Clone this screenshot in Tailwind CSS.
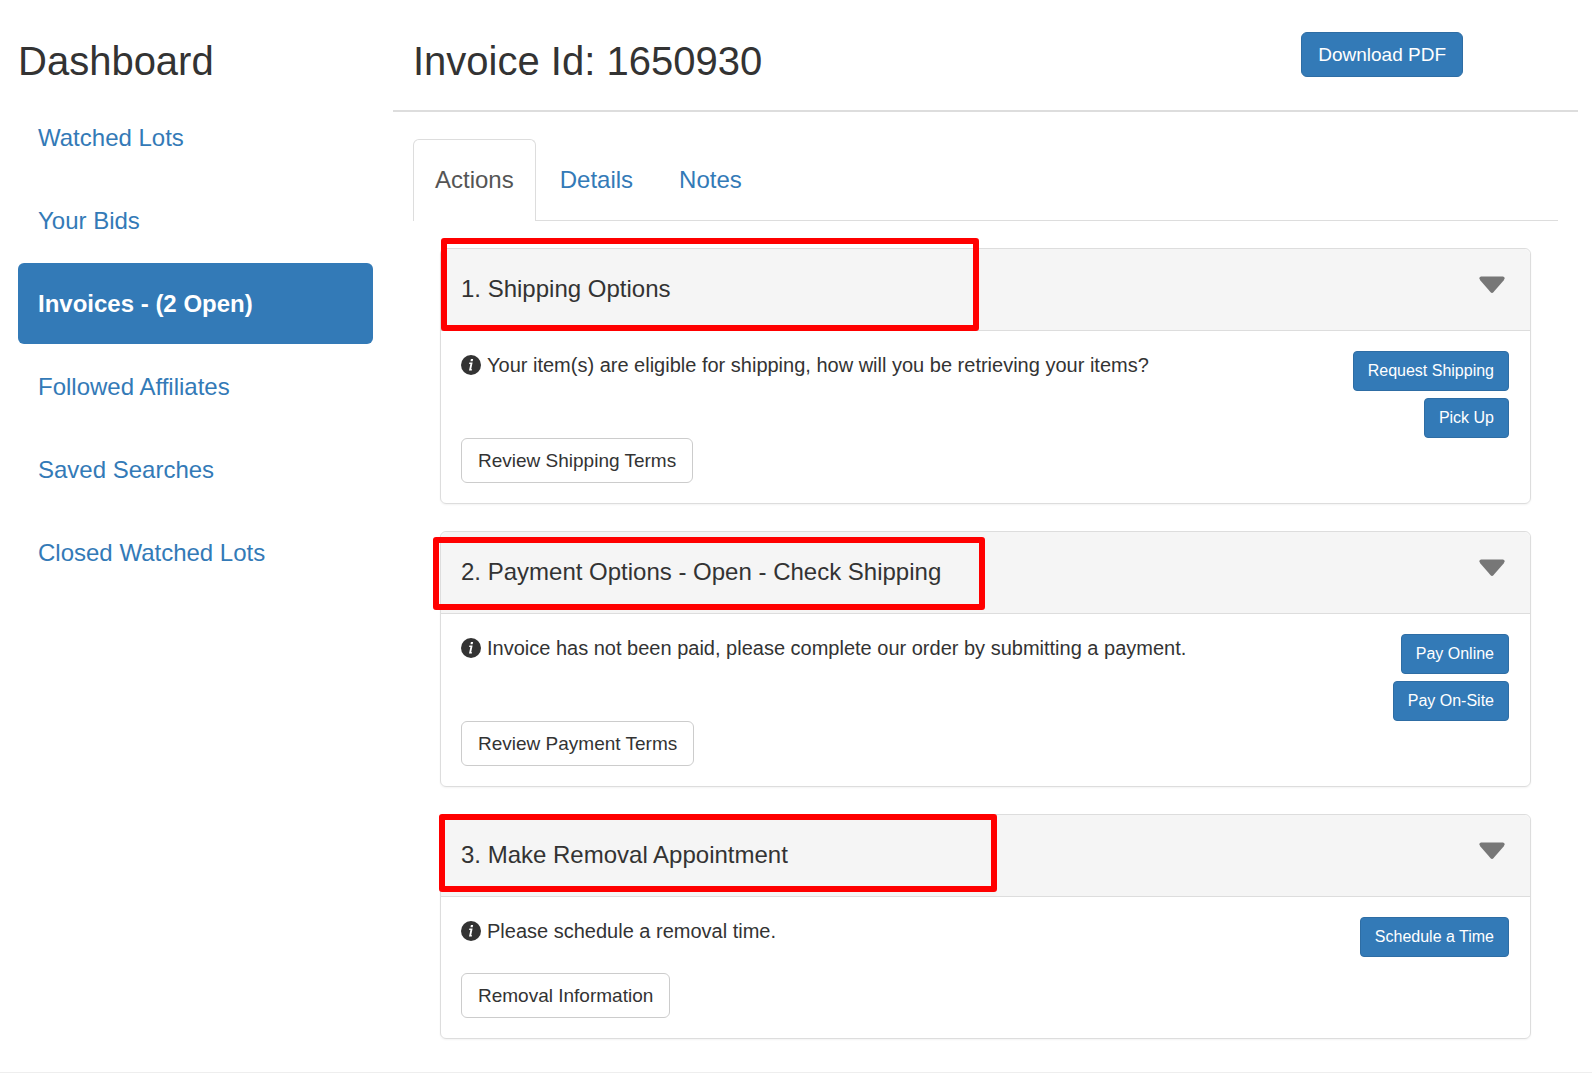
<!DOCTYPE html>
<html lang="en">
<head>
    <meta charset="UTF-8">
    <meta name="viewport" content="width=device-width, initial-scale=1.0">
    <title>Invoice Id: 1650930</title>
    <script src="https://cdn.jsdelivr.net/npm/@tailwindcss/browser@4"></script>
</head>
<body class="bg-white font-['Liberation_Sans',Arial,sans-serif] text-[#333]">
    <!-- Shared icons -->
    <svg class="hidden">
        <symbol id="caret" viewBox="0 0 26 18">
            <path d="M2 0.5H24Q26 0.8 25.6 2.6L24.6 4.4L14.6 16Q13 17.8 11.4 16L1.4 4.4L0.4 2.6Q0 0.8 2 0.5Z" fill="#777"/>
        </symbol>
        <symbol id="info" viewBox="0 0 20 20">
            <circle cx="10" cy="10" r="10" fill="#333"/>
            <path d="M9.9 4h2.2l-.4 2.2H9.5zM8.4 7.6h3.2l-1.4 6.7h.9l-.3 1.3H8l.3-1.3 1.1-5.3H8.1z" fill="#fff"/>
        </symbol>
    </svg>

    <div class="flex border-b border-[#eee] pb-[33px]">
        <!-- Sidebar -->
        <aside class="w-[393px] shrink-0 pl-[18px] pr-[20px] pt-[38px]">
            <h1 class="text-[40px] leading-[46px]">Dashboard</h1>
            <nav class="mt-[13px] flex flex-col gap-[2px] text-2xl text-[#337ab7]">
                <a href="#" class="rounded-md px-[20px] py-[24px] leading-[33px]">Watched Lots</a>
                <a href="#" class="rounded-md px-[20px] py-[24px] leading-[33px]">Your Bids</a>
                <a href="#" class="rounded-md bg-[#337ab7] px-[20px] py-[24px] font-bold leading-[33px] text-white">Invoices - (2 Open)</a>
                <a href="#" class="rounded-md px-[20px] py-[24px] leading-[33px]">Followed Affiliates</a>
                <a href="#" class="rounded-md px-[20px] py-[24px] leading-[33px]">Saved Searches</a>
                <a href="#" class="rounded-md px-[20px] py-[24px] leading-[33px]">Closed Watched Lots</a>
            </nav>
        </aside>

        <!-- Invoice -->
        <main class="mr-[14px] min-w-0 flex-1">
            <header class="flex h-[112px] items-start justify-between border-b-2 border-[#ddd] px-[20px]">
                <h2 class="pt-[38px] text-[40px] leading-[46px]">Invoice Id: 1650930</h2>
                <button type="button" class="mr-[95px] mt-8 rounded-md border border-[#2e6da4] bg-[#337ab7] px-4 text-[19px] leading-[43px] text-white">Download PDF</button>
            </header>

            <div class="px-[20px] pt-[27px]">
                <div role="tablist" class="flex gap-[2px] border-b border-[#ddd] text-2xl">
                    <button type="button" role="tab" aria-selected="true" class="-mb-px rounded-t-md border border-b-0 border-[#ddd] bg-white px-[21px] pb-[25px] pt-[23px] leading-[33px] text-[#555]">Actions</button>
                    <button type="button" role="tab" aria-selected="false" class="px-[22px] py-[24px] leading-[33px] text-[#337ab7]">Details</button>
                    <button type="button" role="tab" aria-selected="false" class="px-[22px] py-[24px] leading-[33px] text-[#337ab7]">Notes</button>
                </div>

                <div class="flex flex-col gap-[27px] px-[27px] pt-[27px]">
                    <!-- Shipping -->
                    <section class="relative rounded-md border border-[#ddd] shadow-xs">
                        <div class="flex items-start justify-between rounded-t-md border-b border-[#ddd] bg-[#f5f5f5] pb-[25px] pl-[20px] pr-[21px] pt-[23px]">
                            <h3 class="text-2xl leading-[33px]">1. Shipping Options</h3>
                            <svg class="mr-1 mt-1 h-[18px] w-[26px]"><use href="#caret"/></svg>
                        </div>
                        <div class="py-[20px] pl-[20px] pr-[21px]">
                            <div class="flex min-h-[87px] items-start justify-between">
                                <p class="flex items-center gap-[6px] text-xl leading-[28px]"><svg class="size-[20px]"><use href="#info"/></svg>Your item(s) are eligible for shipping, how will you be retrieving your items?</p>
                                <div class="flex flex-col items-end gap-[7px]">
                                    <button type="button" class="rounded-sm border border-[#2e6da4] bg-[#337ab7] px-[14px] leading-[38px] text-white">Request Shipping</button>
                                    <button type="button" class="rounded-sm border border-[#2e6da4] bg-[#337ab7] px-[14px] leading-[38px] text-white">Pick Up</button>
                                </div>
                            </div>
                            <button type="button" class="rounded-md border border-[#ccc] bg-white px-4 text-[19px] leading-[43px]">Review Shipping Terms</button>
                        </div>
                        <div class="pointer-events-none absolute -top-[11px] left-0 h-[93px] w-[538px] rounded-[3px] border-6 border-[#f00]"></div>
                    </section>

                    <!-- Payment -->
                    <section class="relative rounded-md border border-[#ddd] shadow-xs">
                        <div class="flex items-start justify-between rounded-t-md border-b border-[#ddd] bg-[#f5f5f5] pb-[25px] pl-[20px] pr-[21px] pt-[23px]">
                            <h3 class="text-2xl leading-[33px]">2. Payment Options - Open - Check Shipping</h3>
                            <svg class="mr-1 mt-1 h-[18px] w-[26px]"><use href="#caret"/></svg>
                        </div>
                        <div class="py-[20px] pl-[20px] pr-[21px]">
                            <div class="flex min-h-[87px] items-start justify-between">
                                <p class="flex items-center gap-[6px] text-xl leading-[28px]"><svg class="size-[20px]"><use href="#info"/></svg>Invoice has not been paid, please complete our order by submitting a payment.</p>
                                <div class="flex flex-col items-end gap-[7px]">
                                    <button type="button" class="rounded-sm border border-[#2e6da4] bg-[#337ab7] px-[14px] leading-[38px] text-white">Pay Online</button>
                                    <button type="button" class="rounded-sm border border-[#2e6da4] bg-[#337ab7] px-[14px] leading-[38px] text-white">Pay On-Site</button>
                                </div>
                            </div>
                            <button type="button" class="rounded-md border border-[#ccc] bg-white px-4 text-[19px] leading-[43px]">Review Payment Terms</button>
                        </div>
                        <div class="pointer-events-none absolute -left-[8px] top-[5px] h-[73px] w-[552px] rounded-[3px] border-6 border-[#f00]"></div>
                    </section>

                    <!-- Removal -->
                    <section class="relative rounded-md border border-[#ddd] shadow-xs">
                        <div class="flex items-start justify-between rounded-t-md border-b border-[#ddd] bg-[#f5f5f5] pb-[25px] pl-[20px] pr-[21px] pt-[23px]">
                            <h3 class="text-2xl leading-[33px]">3. Make Removal Appointment</h3>
                            <svg class="mr-1 mt-1 h-[18px] w-[26px]"><use href="#caret"/></svg>
                        </div>
                        <div class="py-[20px] pl-[20px] pr-[21px]">
                            <div class="flex min-h-[56px] items-start justify-between">
                                <p class="flex items-center gap-[6px] text-xl leading-[28px]"><svg class="size-[20px]"><use href="#info"/></svg>Please schedule a removal time.</p>
                                <button type="button" class="rounded-sm border border-[#2e6da4] bg-[#337ab7] px-[14px] leading-[38px] text-white">Schedule a Time</button>
                            </div>
                            <button type="button" class="rounded-md border border-[#ccc] bg-white px-4 text-[19px] leading-[43px]">Removal Information</button>
                        </div>
                        <div class="pointer-events-none absolute -left-[2px] -top-px h-[78px] w-[558px] rounded-[3px] border-6 border-[#f00]"></div>
                    </section>
                </div>
            </div>
        </main>
    </div>
</body>
</html>
